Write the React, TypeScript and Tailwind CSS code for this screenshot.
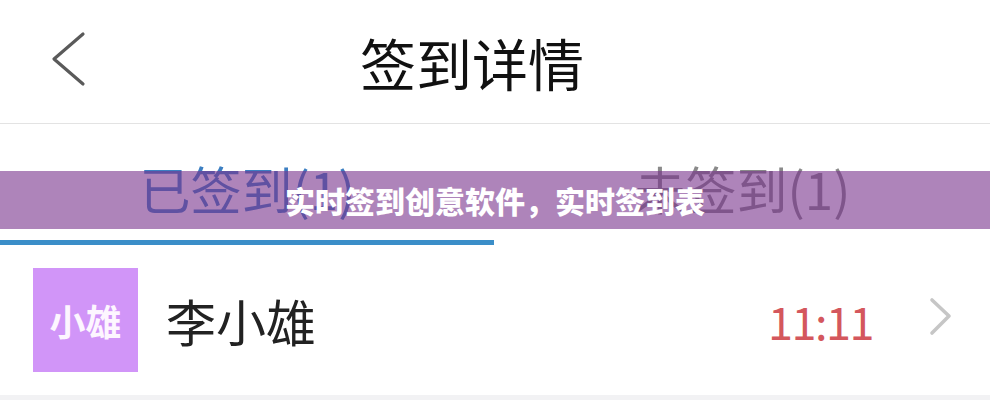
const font = { fontFamily: '"Noto Sans CJK SC", "Noto Sans", sans-serif' };

const BackIcon = () => (
  <svg width="36" height="56" viewBox="0 0 36 56" className="shrink-0">
    <path d="M33 3 L4 28 L33 53" fill="none" stroke="#5a5a5a" strokeWidth="3.2" strokeLinecap="round" strokeLinejoin="round" />
  </svg>
);

const RowChevron = () => (
  <svg width="26" height="40" viewBox="0 0 26 40" className="shrink-0">
    <path d="M4 3 L21 19 L4 36" fill="none" stroke="#c6c6c6" strokeWidth="3.6" strokeLinecap="round" strokeLinejoin="round" />
  </svg>
);

export default function App() {
  return (
    <div className="relative h-[400px] w-[990px] overflow-hidden bg-white" style={font}>
      {/* header */}
      <div className="flex h-[123px] items-center">
        <div className="ml-[50px] mt-[-6px]">
          <BackIcon />
        </div>
        <h1 className="ml-[274px] text-[56px] font-normal leading-none text-[#111]">签到详情</h1>
      </div>
      <div className="h-px bg-[#e3e3e3]" />

      {/* tabs */}
      <div className="flex h-[121px]">
        <div className="flex flex-1 flex-col">
          <div className="flex flex-1 items-center justify-center pt-[12px]">
            <span className="text-[51px] leading-none text-[#3c7fc2]">已签到(1)</span>
          </div>
          <div className="h-[5px] w-[494px] bg-[#3b8ec8]" />
        </div>
        <div className="flex flex-1 items-center justify-center pt-[7px]">
          <span className="text-[51px] leading-none text-[#8a8a8a]">未签到(1)</span>
        </div>
      </div>

      {/* row */}
      <div className="flex h-[150px] items-center">
        <div className="ml-[33px] flex h-[104px] w-[105px] items-center justify-center bg-[#d195f8]">
          <span className="text-[36px] font-bold leading-none text-[#fdf6ff]">小雄</span>
        </div>
        <span className="ml-[28px] text-[50px] leading-none text-[#222]">李小雄</span>
        <span className="ml-auto text-[45px] leading-none tracking-[-1.5px] text-[#d4575d]">11:11</span>
        <div className="ml-[55px] mr-[36px] mt-[-6px]">
          <RowChevron />
        </div>
      </div>
      <div className="h-[6px] bg-[#f2f2f4]" />

      {/* caption overlay */}
      <div className="absolute left-0 right-0 top-[171px] flex h-[58px] items-center justify-center bg-[rgba(120,50,140,0.6)]">
        <span className="text-[30px] font-black leading-none text-white">实时签到创意软件，实时签到表</span>
      </div>
    </div>
  );
}
